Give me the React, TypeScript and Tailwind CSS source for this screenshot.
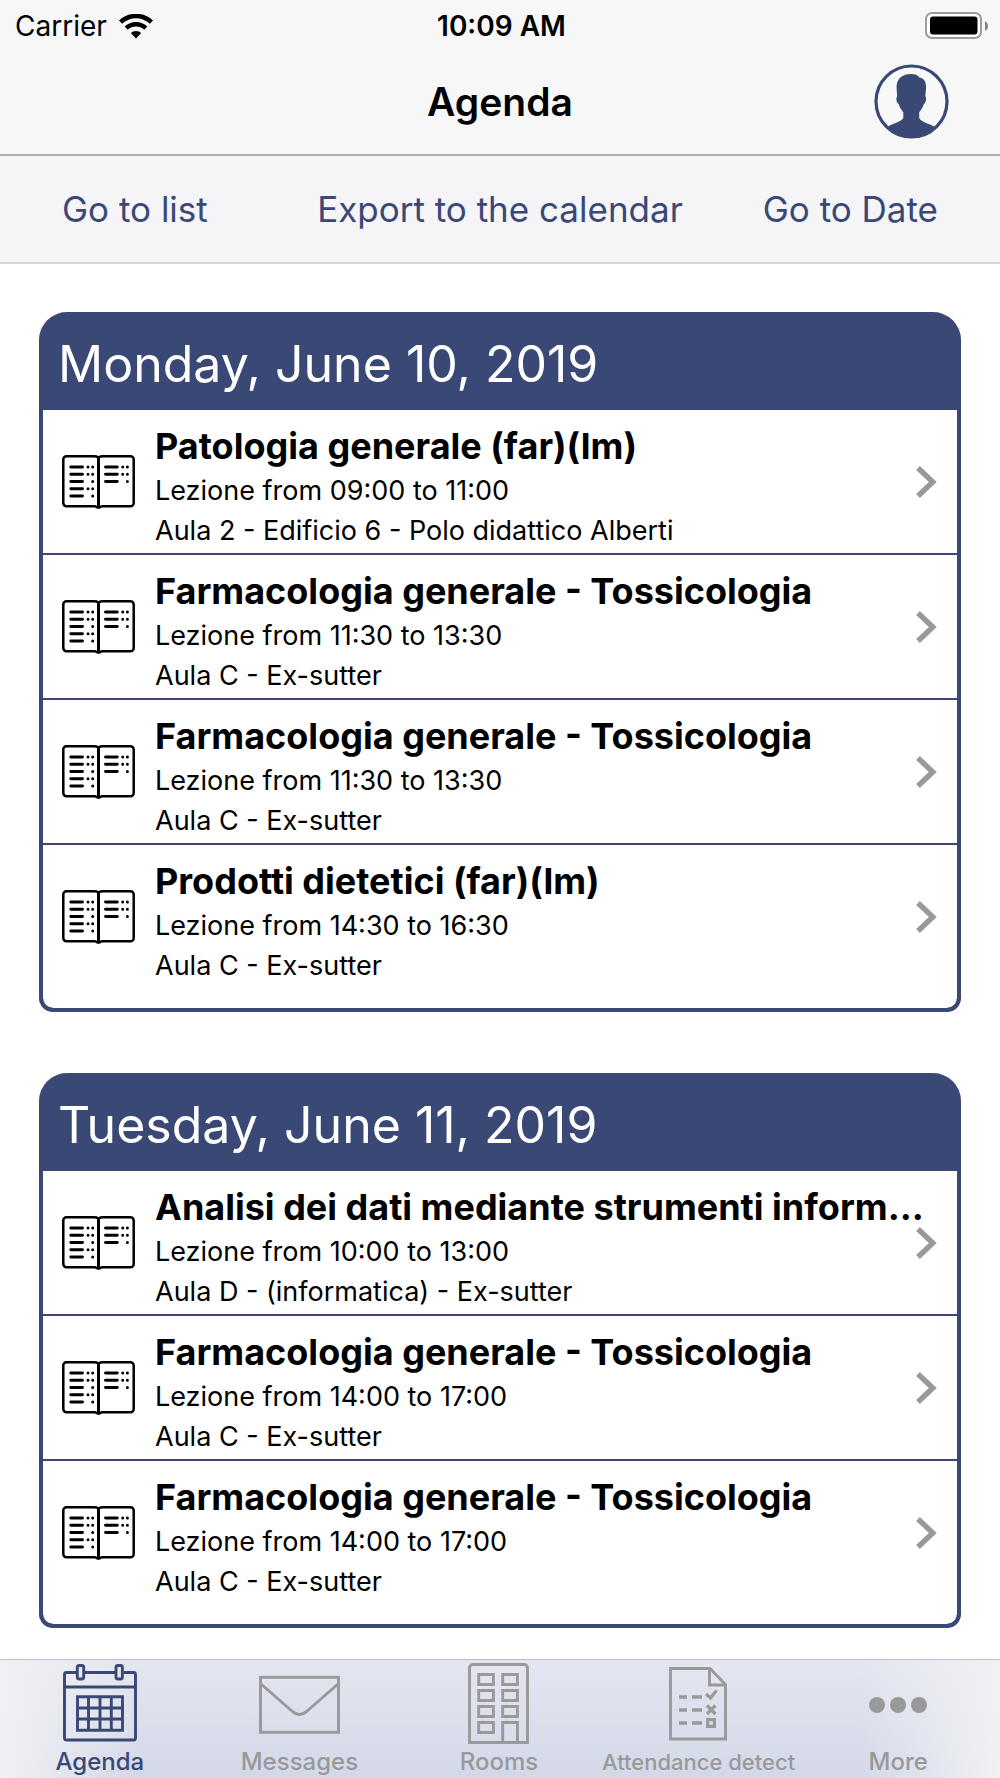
// File: src/App.tsx
import React from 'react';

interface Lesson {
  title: string;
  time: string;
  room: string;
}

interface Day {
  date: string;
  lessons: Lesson[];
}

const days: Day[] = [
  {
    date: 'Monday, June 10, 2019',
    lessons: [
      { title: 'Patologia generale (far)(lm)', time: 'Lezione from 09:00 to 11:00', room: 'Aula 2 - Edificio 6 - Polo didattico Alberti' },
      { title: 'Farmacologia generale - Tossicologia', time: 'Lezione from 11:30 to 13:30', room: 'Aula C - Ex-sutter' },
      { title: 'Farmacologia generale - Tossicologia', time: 'Lezione from 11:30 to 13:30', room: 'Aula C - Ex-sutter' },
      { title: 'Prodotti dietetici (far)(lm)', time: 'Lezione from 14:30 to 16:30', room: 'Aula C - Ex-sutter' },
    ],
  },
  {
    date: 'Tuesday, June 11, 2019',
    lessons: [
      { title: 'Analisi dei dati mediante strumenti inform...', time: 'Lezione from 10:00 to 13:00', room: 'Aula D - (informatica) - Ex-sutter' },
      { title: 'Farmacologia generale - Tossicologia', time: 'Lezione from 14:00 to 17:00', room: 'Aula C - Ex-sutter' },
      { title: 'Farmacologia generale - Tossicologia', time: 'Lezione from 14:00 to 17:00', room: 'Aula C - Ex-sutter' },
    ],
  },
];

/* ── Icons ── */

const WifiIcon = () => (
  <svg width="34" height="25" viewBox="0 0 34 25" fill="none" stroke="#000" aria-hidden="true">
    <path d="M1.5 8.2A22.5 22.5 0 0 1 32.5 8.2" strokeWidth="4.6" />
    <path d="M7.2 14.2A14.2 14.2 0 0 1 26.8 14.2" strokeWidth="4.4" />
    <path d="M17 24.5l-5.2-5.4a7.6 7.6 0 0 1 10.4 0z" fill="#000" stroke="none" />
  </svg>
);

const BatteryIcon = () => (
  <svg width="63" height="28" viewBox="0 0 63 28" aria-hidden="true">
    <rect x="1" y="1" width="55" height="25" rx="6" fill="#fff" stroke="#9b9b9b" strokeWidth="2" />
    <rect x="5" y="4.500" width="47.5" height="18" rx="3" fill="#000" />
    <path d="M60 9c4 2 4 8 0 10z" fill="#858585" />
  </svg>
);

const ProfileIcon = () => (
  <svg width="75" height="75" viewBox="0 0 75 75" aria-hidden="true">
    <circle cx="37.5" cy="37.5" r="35.500" fill="#f8f8f8" stroke="#3a4876" strokeWidth="3.2" />
    <path
      d="M37 10c4 0 7 1 8.500 3.500c5 1 7 5 6.500 11l-.7 8c1.500.6.9 6.500-1.500 7.600c-1 3.500-2.500 6-4.600 8.200v5.700c2 4.500 11 5.500 16.800 9.500A36 36 0 0 1 12.500 63.500c5.800-4.500 14.500-5 16.800-9.500v-5.700c-2-2.200-3.600-4.700-4.600-8.200c-2.400-1.100-3-6.500-1.500-7.600l-.6-8C22 15 28 10 37 10z"
      fill="#3a4876"
    />
  </svg>
);

const BookIcon = () => (
  <svg width="73" height="54" viewBox="0 0 73 54" fill="none" stroke="#000" strokeLinecap="round" aria-hidden="true">
    <path d="M36.500 2.500C35 1.500 34 1.300 32 1.300H4.500a3.200 3.200 0 0 0-3.200 3.200v43.500a3.200 3.200 0 0 0 3.200 3.200H33c1 0 1.500 1.300 3.500 1.300s2.500-1.300 3.500-1.300h28.500a3.200 3.200 0 0 0 3.200-3.200V4.500a3.200 3.200 0 0 0-3.200-3.200H41c-2 0-3 .2-4.500 1.200z" strokeWidth="2.500" />
    <path d="M36.500 2.500V52" strokeWidth="3" />
    <path d="M8.800 12H20.500M8.800 19.200H20.500M8.800 26.500H20.500M8.800 33.800H20.500M8.800 41H20.500M43.500 12H55.300M43.500 19.200H55.300M43.500 26.500H55.300" strokeWidth="2.900" />
    <path d="M26 12h0M30.700 12h0M26 19.200h0M30.700 19.200h0M30.700 26.500h0M26 33.800h0M30.700 33.800h0M30.700 41h0M60.700 12h0M65.400 12h0M60.700 19.200h0M65.400 19.200h0M65.400 26.500h0" strokeWidth="3" />
  </svg>
);

const ChevronIcon = () => (
  <svg width="21" height="32" viewBox="0 0 21 32" fill="none" stroke="#999" strokeWidth="5.400" aria-hidden="true">
    <path d="M2 2L16.800 16L2 30" />
  </svg>
);

const CalendarIcon = () => (
  <svg width="74" height="78" viewBox="0 0 74 78" fill="none" stroke="currentColor" strokeWidth="2.900" aria-hidden="true">
    <path d="M13 8.500H3.500a2 2 0 0 0-2 2V74a2 2 0 0 0 2 2h67a2 2 0 0 0 2-2V10.500a2 2 0 0 0-2-2H61M22 8.500h30M2 23h70" />
    <rect x="14.300" y="1.500" width="6.400" height="13.500" rx="2" />
    <rect x="53" y="1.500" width="6.400" height="13.500" rx="2" />
    <path d="M14.500 32.800h45v33.500h-45zM25.500 33v33M37 33v33M48.300 33v33M14.500 44h45M14.500 55h45" />
  </svg>
);

const EnvelopeIcon = () => (
  <svg width="81" height="78" viewBox="0 0 81 78" fill="none" stroke="currentColor" strokeWidth="2.900" aria-hidden="true">
    <rect x="1.500" y="13.300" width="78" height="55" />
    <path d="M2 20L34 48q6.500 5 13 0L79 20" />
  </svg>
);

const BuildingIcon = () => (
  <svg width="62" height="82" viewBox="0 0 62 82" fill="none" stroke="currentColor" strokeWidth="2.900" aria-hidden="true">
    <path d="M1.500 80.500V6a3.500 3.500 0 0 1 3.500-3.500h51A3.500 3.500 0 0 1 59.500 6v74.500z" />
    <path d="M10.700 12.500h14.700v10H10.700zM34.700 12.500h14.700v10H34.700zM10.700 28.500h14.700v10H10.700zM34.700 28.500h14.700v10H34.700zM10.700 44.500h14.700v10H10.700zM34.700 44.500h14.700v10H34.700zM10.700 60.500h14.700v10H10.700zM34.700 80V60.500h14.700V80" />
  </svg>
);

const ChecklistIcon = () => (
  <svg width="59" height="76" viewBox="0 0 59 76" fill="none" stroke="currentColor" strokeWidth="2.900" aria-hidden="true">
    <path d="M1.500 3.500h39.500L56.500 19.500v54.500H1.500zM40.500 3.500v16.500h16" />
    <path d="M10 32h8M23 32h10M10 45h8M23 45h10M10 58h8M23 58h10" strokeWidth="3.400" />
    <path d="M37 29l4.500 4L47.500 25.500M38 40.500l8.500 8.500M46.500 40.500L38 49" strokeWidth="3.200" />
    <path d="M38.700 54.700h6.700v6.700h-6.700z" strokeWidth="3.200" />
  </svg>
);

const MoreIcon = () => (
  <svg width="60" height="78" viewBox="0 0 60 78" fill="currentColor" aria-hidden="true">
    <circle cx="9" cy="41" r="8" />
    <circle cx="30" cy="41" r="8" />
    <circle cx="51" cy="41" r="8" />
  </svg>
);

/* ── Lesson row ── */

const LessonRow: React.FC<{ lesson: Lesson }> = ({ lesson }) => (
  <li className="border-b-2 border-[#3a4876] last:border-b-0 last:pb-5">
    <a href="#lesson" className="relative flex items-center pl-[19px] pr-8 text-black">
      <BookIcon />
      <div className="ml-5 min-w-0 flex-1 whitespace-nowrap pb-0.5 pt-3">
        <h3 className="text-[36px] leading-[49px] font-bold">{lesson.title}</h3>
        <p className="text-[27px] leading-[40px]">{lesson.time}</p>
        <p className="text-[27px] leading-[40px]">{lesson.room}</p>
      </div>
      {/* the chevron may sit over a long title */}
      <span className="absolute inset-y-0 right-5 flex items-center">
        <ChevronIcon />
      </span>
    </a>
  </li>
);

const DayCard: React.FC<{ day: Day }> = ({ day }) => (
  <section className="overflow-hidden rounded-t-[28px] rounded-b-[14px] border-4 border-t-0 border-[#3a4876] bg-[#3a4876]">
    <h2 className="px-[15px] pt-4 pb-[10px] text-[50px] leading-[72px] text-white">{day.date}</h2>
    <ul className="rounded-b-[10px] bg-white">
      {day.lessons.map((lesson, i) => (
        <LessonRow key={i} lesson={lesson} />
      ))}
    </ul>
  </section>
);

const tabs = [
  { label: 'Agenda', icon: <CalendarIcon />, color: 'text-[#3a4876]', size: 'text-[24px]' },
  { label: 'Messages', icon: <EnvelopeIcon />, color: 'text-[#999]', size: 'text-[24px]' },
  { label: 'Rooms', icon: <BuildingIcon />, color: 'text-[#999]', size: 'text-[24px]' },
  // long label, needs the smaller size to stay inside its column
  { label: 'Attendance detect', icon: <ChecklistIcon />, color: 'text-[#999]', size: 'text-[22px]' },
  { label: 'More', icon: <MoreIcon />, color: 'text-[#999]', size: 'text-[24px]' },
];

const App: React.FC = () => {
  return (
    <div className="flex min-h-screen flex-col bg-white font-['Inter','Liberation_Sans',sans-serif]">
      <header className="border-b-2 border-[#b0b0b2] bg-[#f7f7f8]">
        {/* Status bar */}
        <div className="grid grid-cols-[1fr_auto_1fr] items-center pt-1 pl-[15px] pr-3 text-[28px] leading-[44px]">
          <div className="flex items-center gap-3">
            <span>Carrier</span>
            <WifiIcon />
          </div>
          <span className="font-semibold">10:09 AM</span>
          <span className="flex justify-end">
            <BatteryIcon />
          </span>
        </div>

        {/* Title bar */}
        <div className="grid grid-cols-[1fr_auto_1fr] items-center pt-4 pb-[15px] pr-[51px]">
          <span />
          <h1 className="pl-[51px] text-[39px] leading-[48px] font-semibold">Agenda</h1>
          <button type="button" aria-label="Profile" className="justify-self-end">
            <ProfileIcon />
          </button>
        </div>
      </header>

      <div className="grid grid-cols-[1fr_auto_1fr] items-center border-b-2 border-[#d6d6d8] bg-[#f5f5f8] px-[62px] py-7 text-[35px] leading-[50px] text-[#3a4876]">
        <button type="button" className="justify-self-start">Go to list</button>
        <button type="button">Export to the calendar</button>
        <button type="button" className="justify-self-end">Go to Date</button>
      </div>

      <main className="flex flex-1 flex-col gap-[61px] px-[39px] pt-12 pb-[31px]">
        {days.map((day) => (
          <DayCard key={day.date} day={day} />
        ))}
      </main>

      <nav className="sticky bottom-0 grid grid-cols-5 border-t border-[#bcbdc2] bg-[#f0f1f4] bg-[linear-gradient(90deg,#f0f1f4_0%,transparent_14%,transparent_86%,#f0f1f4_100%),linear-gradient(180deg,#e4e6f0_0%,#d3d8e8_100%)] pr-0.5">
        {tabs.map((tab) => (
          <a key={tab.label} href="#tab" className={`flex flex-col items-center ${tab.color}`}>
            <span className="flex h-[86px] items-center">{tab.icon}</span>
            <span className={`whitespace-nowrap leading-8 font-medium ${tab.size}`}>{tab.label}</span>
          </a>
        ))}
      </nav>
    </div>
  );
};

export default App;
